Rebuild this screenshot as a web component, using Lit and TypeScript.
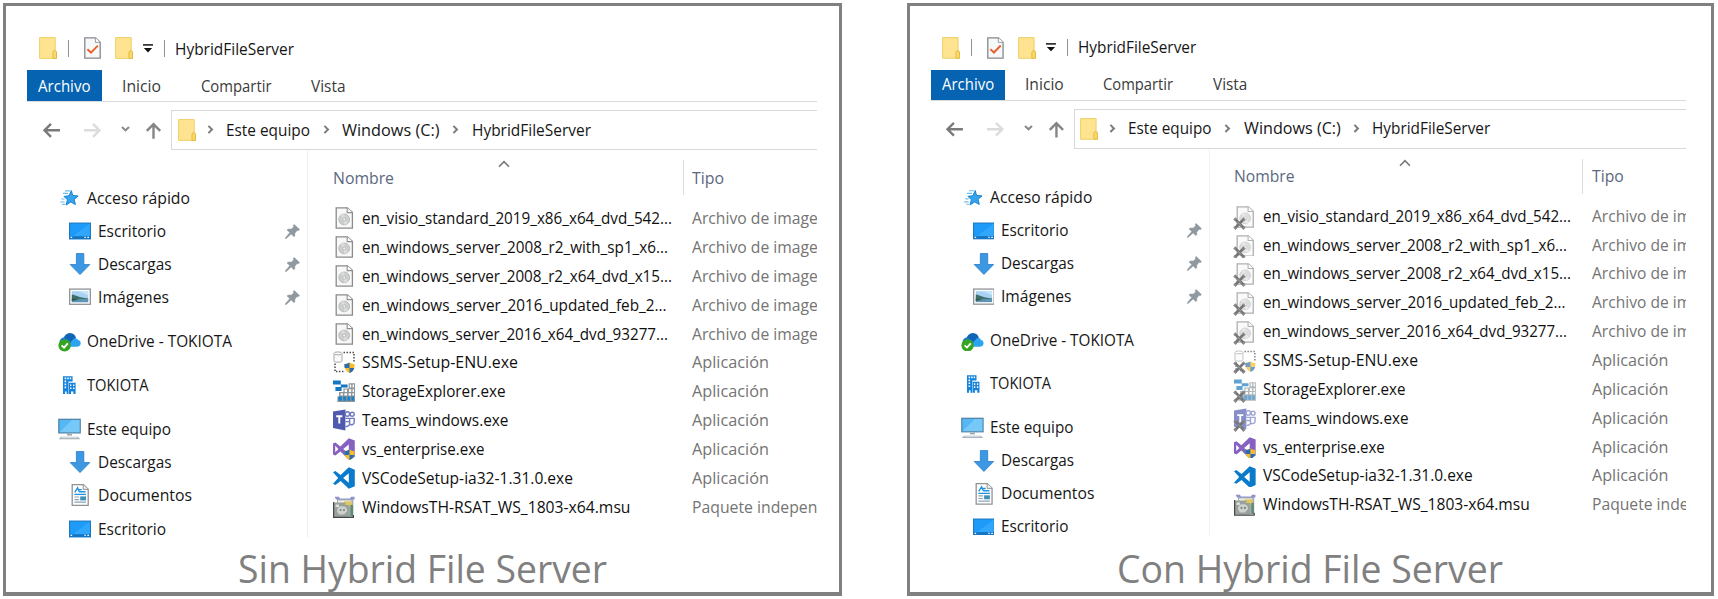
import { LitElement, html, css, svg, nothing, TemplateResult } from "lit";
import { customElement, property } from "lit/decorators.js";

/* ---------- text set to a given advance width ---------- */
@customElement("fit-text")
class FitText extends LitElement {
  @property({ type: Number }) w = 100;
  static styles = css`
    :host { display: inline-block; white-space: nowrap; flex: none; }
    .box { display: block; }
    .t { display: inline-block; transform-origin: 0 50%; }
  `;
  firstUpdated() {
    this.fit();
    document.fonts.ready.then(() => this.fit());
  }
  fit() {
    const box = this.renderRoot.querySelector(".box") as HTMLElement;
    const t = this.renderRoot.querySelector(".t") as HTMLElement;
    t.style.transform = "none";
    const k = box.getBoundingClientRect().width / t.getBoundingClientRect().width;
    t.style.transform = `scaleX(${k})`;
  }
  render() {
    return html`<span class="box" style="width:${this.w}px"><span class="t"><slot></slot></span></span>`;
  }
}

/* ---------- icons ---------- */
const folder = html`<svg width="18" height="22" viewBox="0 0 18 22">
  <path d="M.6.6H16.2V13.6L17.5 14.8V21.4H.6Z" fill="#fee491" stroke="#f0cf66" stroke-width="1"/>
  <path d="M14 21.4V15.2L15.2 13.6H16.2L17.5 14.8V21.4Z" fill="#fbd96c" stroke="#e3b93f" stroke-width="1"/>
</svg>`;

const check = html`<svg width="17" height="22" viewBox="0 0 17 22">
  <path d="M.8.8H11.6L16.2 5.2V21.2H.8Z" fill="#f7f8fa" stroke="#85888c" stroke-width="1.3"/>
  <path d="M11.4.8V5.4H16.2" fill="#fff" stroke="#9a9da0" stroke-width="1"/>
  <path d="M3.4 12.2L7 15.6L13.8 8.6" fill="none" stroke="#e8622c" stroke-width="2"/>
</svg>`;

const dropdown = html`<svg width="10" height="9" viewBox="0 0 10 9">
  <path d="M0 .9H10" stroke="#222" stroke-width="1.6"/><path d="M.8 4H9.2L5 8.4Z" fill="#111"/>
</svg>`;

const arrow = (dir: string, color: string) => {
  const d = dir === "left" ? "M17 8H1.6M8 1.5L1.5 8L8 14.5" : dir === "right" ? "M0 8H15.4M9 1.5L15.5 8L9 14.5" : "M8.5 16.4V1.8M1.8 8.6L8.5 1.8L15.2 8.6";
  return html`<svg width="17" height="17" viewBox="0 0 17 16.4"><path d=${d} fill="none" stroke=${color} stroke-width="2.4"/></svg>`;
};

const chevDown = html`<svg width="9" height="6" viewBox="0 0 9 6"><path d="M1 1L4.5 4.4L8 1" fill="none" stroke="#8a8a8a" stroke-width="2.1"/></svg>`;
const chevRight = html`<svg width="7" height="9" viewBox="0 0 7 9"><path d="M1.4.9L5 4.5L1.4 8.1" fill="none" stroke="#7c7c7c" stroke-width="2"/></svg>`;
const sortUp = html`<svg width="12" height="8" viewBox="0 0 12 8"><path d="M1 6.8L6 1.6L11 6.8" fill="none" stroke="#777" stroke-width="1.6"/></svg>`;

const pin = html`<svg width="15" height="15" viewBox="0 0 15 15">
  <path d="M9.2.4L14.6 5.6L13.4 6.8L12.2 6.4L9.8 9.2C10.2 10.6 9.8 12 9 12.8L6.2 10L1.6 14.2L.2 14.8L.8 13.2L4.8 8.6L2 6C3 4.8 4.8 4.8 6.2 5.2L8.8 2.8L8.2 1.4Z" fill="#8f999f" stroke="#8f999f" stroke-width=".5"/>
</svg>`;

const treeIcons: Record<string, TemplateResult> = {
  star: html`<svg width="22" height="22" viewBox="0 0 22 22">
    <path d="M13.4 3.6L14.6 8.4L20.2 9L16.2 12.4L17.4 17.6L12.8 15L8.2 18L9.4 12.8L6 9.4L11 8.8Z" fill="#35a4ec" stroke="#1b83d0" stroke-width="1"/>
    <path d="M7 3.8H12M5 6.4H10M3.4 12H6.6M2.2 15H6.6M4.2 17.4H7.4" stroke="#6bbdf0" stroke-width="1.2"/>
  </svg>`,
  desktop: html`<svg width="22" height="22" viewBox="0 0 22 22">
    <rect x=".6" y="3.1" width="20.8" height="15.8" fill="#1e9bf8" stroke="#1478c4" stroke-width="1.1"/>
    <path d="M1.2 18.3L20.8 3.7V16H1.2Z" fill="#3fb0ff" opacity=".55"/>
    <path d="M.6 17.6H21.4" stroke="#1374c2" stroke-width="2.6"/>
    <path d="M1.6 17.4H3.2M15.4 17.4H16.8M18.4 17.4H20" stroke="#fff" stroke-width="1.3"/>
  </svg>`,
  down: html`<svg width="22" height="22" viewBox="0 0 22 22">
    <path d="M7.4.6H14.8V11.6H20.8L11 21.6L1.2 11.6H7.4Z" fill="#3d98e4" stroke="#2f82cc" stroke-width=".9"/>
  </svg>`,
  image: html`<svg width="22" height="22" viewBox="0 0 22 22">
    <rect x=".7" y="3.1" width="20.6" height="15.2" fill="#fff" stroke="#8f9295" stroke-width="1.3"/>
    <rect x="2.8" y="5.2" width="16.4" height="11" fill="#a9d2f3"/>
    <path d="M2.8 5.2H10L19.2 9.2V5.2Z" fill="#c9e6fa"/>
    <path d="M2.8 8.6C7 9 9 11.6 19.2 12.6V13.4H2.8Z" fill="#3d6f6a"/>
    <rect x="2.8" y="13" width="16.4" height="3.2" fill="#5d93b4"/>
    <path d="M2.8 12.6L10 13.6L2.8 15Z" fill="#2f5a4a"/>
  </svg>`,
  onedrive: html`<svg width="23" height="22" viewBox="0 0 23 22">
    <path d="M5 11C5 7 8 3 12 3C15.4 3 17.4 5.2 18 8L12 13Z" fill="#0f64b6"/>
    <path d="M1.6 12C1.8 8.6 4.8 7 7.4 7.8L15 13L10 16.6H4Z" fill="#1378d0"/>
    <path d="M10 16.8L15 9.4C16.4 7.4 19.4 8 20 10C22.4 10.4 23 12.4 22.6 14C22.2 15.8 20.8 16.8 19 16.8Z" fill="#2ea4ee"/>
    <circle cx="6.6" cy="15.4" r="6.2" fill="#36a420"/>
    <path d="M3.6 15.4L6 17.7L9.8 13.4" fill="none" stroke="#fff" stroke-width="1.8"/>
  </svg>`,
  building: html`<svg width="22" height="22" viewBox="0 0 22 22">
    <path d="M5 2.2H14.6V7.6H10.4V20H5Z" fill="#1583dc"/>
    <path d="M10.8 8.8H17.6V20H15.4V17.4H13V20H10.8Z" fill="#1583dc"/>
    <path d="M6.6 4.4H8.2M9.2 4.4H10.8M11.8 4.4H13.2M6.6 7.4H8.2M6.6 10.4H8.2M6.6 13.4H8.2M12 11.2H13.4M15 11.2H16.4M12 14.2H13.4M15 14.2H16.4" stroke="#fff" stroke-width="1.6"/>
    <path d="M7 17.4H8.6V20H7Z" fill="#fff"/>
  </svg>`,
  pc: html`<svg width="23" height="22" viewBox="0 0 23 22">
    <rect x=".8" y="1.3" width="21.4" height="13.6" fill="#54b8f4" stroke="#4e7f9f" stroke-width="1.2"/>
    <path d="M1.4 14.3L14 1.9H21.6V14.3Z" fill="#84cffb" opacity=".7"/>
    <path d="M9 16.6H14" stroke="#9aa7b0" stroke-width="1.8"/>
    <path d="M3 18.8H20L22.4 21.2H.6Z" fill="#a9b4bd"/>
    <path d="M3.6 19.4H19.4" stroke="#e4e9ed" stroke-width=".9"/>
  </svg>`,
  doc: html`<svg width="22" height="22" viewBox="0 0 22 22">
    <path d="M3.2.7H14.4L19.2 5.2V21.3H3.2Z" fill="#fff" stroke="#8f9295" stroke-width="1.3"/>
    <path d="M14.2.7V5.4H19.2" fill="#f2f2f2" stroke="#8f9295" stroke-width="1"/>
    <path d="M5.8 8.4L8.6 3.8L10.6 8.4M10 5.6H12.8M11 7.8H16.6M5.4 10.4H17" stroke="#2391dd" stroke-width="1.4" fill="none"/>
    <path d="M5.4 13H10M5.4 15.6H10M5.4 18.2H17" stroke="#8aa4b8" stroke-width="1.2"/>
    <rect x="11.2" y="12.4" width="5.8" height="4" fill="#3f90b8"/>
  </svg>`,
};

const shield = svg`<path d="M16.5 11.6C18.6 13 20 13 21.6 13C21.8 17.6 20 20.6 16.5 22C13 20.6 11.2 17.6 11.4 13C13 13 14.4 13 16.5 11.6Z" fill="#f6bc2c"/>
  <path d="M16.5 11.6V17H11.7C11.4 15.8 11.4 14.4 11.4 13C13 13 14.4 13 16.5 11.6ZM16.5 17H21.3C20.5 19.6 19 21.2 16.5 22Z" fill="#2a6cae"/>`;

const fileIcons: Record<string, TemplateResult> = {
  iso: html`<svg width="22" height="22" viewBox="0 0 22 22">
    <path d="M3.2.8H14.4L19.4 5.4V21.2H3.2Z" fill="#f8f8f8" stroke="#8a8a8a" stroke-width="1.3"/>
    <path d="M14.2.8V5.6H19.4" fill="#fff" stroke="#8e8e8e" stroke-width="1.1"/>
    <circle cx="11.2" cy="12.4" r="5.4" fill="#cdcfcf" stroke="#b0b2b2" stroke-width=".8"/>
    <path d="M11.2 12.4L7.6 8.6A5.2 5.2 0 0 1 11.4 7.2ZM11.2 12.4L15 16A5.2 5.2 0 0 1 11 17.6Z" fill="#dcdede"/>
    <circle cx="11.2" cy="12.4" r="1.5" fill="#f4f4f4" stroke="#aaa" stroke-width=".7"/>
  </svg>`,
  ssms: html`<svg width="22" height="22" viewBox="0 0 22 22">
    <path d="M10.5 1.6H21V11M2 12.5V20.6H12" fill="none" stroke="#4b4b4b" stroke-width="1.5" stroke-dasharray="1.5 1.5"/>
    <path d="M1 2.6V10C1 11.6 9 11.6 9 10V2.6" fill="#fdfdfd" stroke="#a5a5a5" stroke-width="1"/>
    <ellipse cx="5" cy="2.4" rx="4" ry="1.5" fill="#fff" stroke="#a5a5a5" stroke-width="1"/>
    ${shield}
  </svg>`,
  storage: html`<svg width="22" height="22" viewBox="0 0 22 22">
    <path d="M0 .6H7.8V4.6H0ZM7.8 4.4H14.6V7.4H7.8ZM2.4 7H8.6V11H2.4Z" fill="#1377c4"/>
    <path d="M15.6 3.2H22V22H4.4V16.4H6V12H10.4V8.6H15.6Z" fill="#8f969b"/>
    <path d="M16.8 4.4H18.2V7.4H16.8ZM19.6 4.4H21V7.4H19.6ZM11.6 9.6H14V12H11.6ZM16 9.2H18.2V12H16ZM19.6 9.2H21V12H19.6ZM7.6 13.2H9.8V15.4H7.6ZM11.4 13.2H14V15.4H11.4ZM15.6 13.2H18V15.4H15.6ZM19.4 13.2H21V15.4H19.4Z" fill="#fff"/>
    <path d="M5.4 16.6H9V20.8H5.4ZM10.2 16.6H13.2V20.8H10.2ZM14.4 16.6H17.2V20.8H14.4ZM18.4 16.6H21V20.8H18.4Z" fill="#1a80c8"/>
  </svg>`,
  teams: html`<svg width="22" height="22" viewBox="0 0 22 22">
    <path d="M0 2.6L12.4.6V21.4L0 19Z" fill="#5059b0"/>
    <path d="M3.2 7.2H9.4M6.3 7.2V14.6" stroke="#fff" stroke-width="1.9"/>
    <circle cx="14.4" cy="5" r="2.2" fill="none" stroke="#7078c0" stroke-width="1.4"/>
    <circle cx="19.2" cy="5.2" r="2" fill="none" stroke="#7078c0" stroke-width="1.4"/>
    <path d="M12.4 9.4H16.6V15.2C16.4 16.6 14.6 17.8 12.4 17.4M16.6 9.4H21.2V13.6C21.2 15.4 18.6 16.4 16.8 15.2M12.4 12.6H16" fill="none" stroke="#7078c0" stroke-width="1.4"/>
  </svg>`,
  vs: html`<svg width="22" height="22" viewBox="0 0 22 22">
    <path d="M15.8.2L21.8 2.6V19L15.8 21.8L7.4 13.6L2.4 17.6L0 16.4V5.4L2.4 4.4L7.4 8.4ZM15.8 6.4L10.2 11L15.8 15.6ZM2.2 7.8V14.2L5.4 11Z" fill="#8661c1" fill-rule="evenodd"/>
    ${shield}
  </svg>`,
  code: html`<svg width="22" height="22" viewBox="0 0 22 22">
    <path d="M15.8.2L21.8 2.8V19.2L15.8 21.8L7.6 14L2.4 18L0 16.8L5.2 11L0 5.2L2.4 4L7.6 8ZM15.8 6.2L10.2 11L15.8 15.8Z" fill="#0a7acb" fill-rule="evenodd"/>
  </svg>`,
  msu: html`<svg width="22" height="22" viewBox="0 0 22 22">
    <path d="M4 3H20.4V21H4Z" fill="#a5aeb4"/>
    <path d="M1.6.8H6L7 2.4H17L18 .8H21.6V3.6H3Z" fill="#8f93cc"/>
    <path d="M5 4.4H18.4V8H5Z" fill="#eeecdf"/>
    <path d="M11 5.4H18.4V11H11Z" fill="#e3c65a"/>
    <path d="M17.4 9H20V20H17.4Z" fill="#5d8d6c"/>
    <path d="M.6 6.6H12.4V9H16.4V21.4H.6Z" fill="#9aa19c"/>
    <path d="M.6 6V21.4H20.4V19" fill="none" stroke="#44484a" stroke-width="1.2"/>
    <path d="M4 15.4C4 12 6.4 9.6 9.4 10.4C12.4 10 14.6 12.4 14 15.4L11 18.6H6Z" fill="#cdd2cf"/>
    <circle cx="7.6" cy="14" r="1.1" fill="#7b847f"/>
    <circle cx="11" cy="14" r="1.1" fill="#7b847f"/>
    <path d="M2.6 8.6H6V11H2.6Z" fill="#dfe3df"/>
  </svg>`,
};

const offlineMark = html`<svg class="mark" width="13" height="13" viewBox="0 0 13 13">
  <path d="M2.4 2.4L10.6 10.8M10.6 2.4L2.4 10.8" stroke="#757575" stroke-width="2.8"/>
  <path d="M1 3.2L3.2 1M9.8 1L12 3.2M1 10L3.4 12.2M9.6 12.2L12 10" stroke="#8a8a8a" stroke-width="2.2"/>
  <path d="M4.6 5.2L8.4 8.6" stroke="#a5a5a5" stroke-width="1"/>
</svg>`;

/* ---------- data ---------- */
interface Node { icon: string; text: string; w: number; sub?: boolean; pin?: boolean; }
const tree: Node[][] = [
  [
    { icon: "star", text: "Acceso rápido", w: 103 },
    { icon: "desktop", text: "Escritorio", w: 68, sub: true, pin: true },
    { icon: "down", text: "Descargas", w: 73.5, sub: true, pin: true },
    { icon: "image", text: "Imágenes", w: 71, sub: true, pin: true },
  ],
  [{ icon: "onedrive", text: "OneDrive - TOKIOTA", w: 145 }],
  [{ icon: "building", text: "TOKIOTA", w: 61.5 }],
  [
    { icon: "pc", text: "Este equipo", w: 84 },
    { icon: "down", text: "Descargas", w: 73.5, sub: true },
    { icon: "doc", text: "Documentos", w: 94, sub: true },
    { icon: "desktop", text: "Escritorio", w: 68, sub: true },
  ],
];

const ISO: [string, number] = ["Archivo de imagen de disco", 200];
const APP: [string, number] = ["Aplicación", 77];
const files: { icon: string; name: string; w: number; type: [string, number]; off?: boolean }[] = [
  { icon: "iso", name: "en_visio_standard_2019_x86_x64_dvd_542...", w: 310, type: ISO, off: true },
  { icon: "iso", name: "en_windows_server_2008_r2_with_sp1_x6...", w: 306, type: ISO, off: true },
  { icon: "iso", name: "en_windows_server_2008_r2_x64_dvd_x15...", w: 310, type: ISO, off: true },
  { icon: "iso", name: "en_windows_server_2016_updated_feb_2...", w: 304.5, type: ISO, off: true },
  { icon: "iso", name: "en_windows_server_2016_x64_dvd_93277...", w: 306, type: ISO, off: true },
  { icon: "ssms", name: "SSMS-Setup-ENU.exe", w: 156, type: APP, off: true },
  { icon: "storage", name: "StorageExplorer.exe", w: 143.5, type: APP, off: true },
  { icon: "teams", name: "Teams_windows.exe", w: 146.5, type: APP, off: true },
  { icon: "vs", name: "vs_enterprise.exe", w: 122.5, type: APP },
  { icon: "code", name: "VSCodeSetup-ia32-1.31.0.exe", w: 211, type: APP },
  { icon: "msu", name: "WindowsTH-RSAT_WS_1803-x64.msu", w: 268.5, type: ["Paquete independiente", 172] },
];

/* ---------- explorer window ---------- */
@customElement("explorer-window")
class ExplorerWindow extends LitElement {
  @property({ type: Boolean, reflect: true }) compact = false;
  static styles = css`
    :host { display: block; width: 790px; margin-left: 21px; overflow: hidden; font: 15.5px/20px "Open Sans", sans-serif; color: #161616; --row: 28.9px; --node: 33.05px; --tree-top: 31.6px; }
    :host([compact]) { zoom: 0.9935; width: 760px; --row: 29.05px; --node: 33.15px; --tree-top: 32.6px; }
    svg { display: block; flex: none; }
    .title { display: flex; align-items: center; height: 44px; padding: 20px 0 0 11.5px; }
    .title fit-text { margin-top: 1px; }
    .title .sep { width: 1px; height: 17px; background: #909090; }
    .s1 { margin: 0 15px 0 11px; }
    .s2 { margin: 0 10px 0 11px; }
    .g1 { margin-left: 14px; }
    .g2 { margin-left: 10.5px; }
    .tabs { display: flex; height: 31px; border-bottom: 1px solid #d9dbdc; align-items: center; color: #3a3a3a; }
    .tabs .on { display: flex; align-items: center; justify-content: center; width: 75px; height: 31px; background: #0563b1; color: #fff; margin-right: 19.5px; }
    .on fit-text { margin-right: 1px; }
    .tab2 { margin-left: 40px; }
    .nav { display: flex; align-items: center; margin-top: 8px; height: 40px; padding-left: 15.5px; }
    .fwd { margin-left: 24px; }
    .hist { margin: 0 15.5px 3px 20px; }
    .addr { display: flex; align-items: center; flex: 1; height: 38px; margin-left: 9px; border: 1px solid #d9d9d9; border-right: 0; padding-left: 5.5px; white-space: nowrap; }
    .addr > svg, .c { margin-bottom: 1px; }
    .c { margin-left: 12.5px; margin-right: 12.5px; }
    .c0 { margin-left: 11px; }
    .main { display: grid; grid-template-columns: 280.5px 1fr; }
    .tree { display: flex; flex-direction: column; gap: 11px; padding-top: var(--tree-top); height: 356px; border-right: 1px solid #f0f1f2; }
    .node { display: flex; align-items: center; height: var(--node); padding-left: 31px; }
    .node.sub { padding-left: 42px; }
    .ico { display: flex; justify-content: center; width: 22px; margin-right: 7px; }
    .sub .ico { margin-right: 6.5px; }
    .push { margin-left: auto; margin-right: 6.5px; }
    .list { min-width: 0; padding-left: 25px; overflow: hidden; }
    .head { display: grid; grid-template-columns: 351px 1fr; height: 45px; color: #5b6880; }
    .hn { display: grid; grid-template-columns: 165.5px 1fr; border-right: 1px solid #dcdee0; height: 35px; margin-top: 10px; }
    .hn fit-text { margin-top: 8px; }
    .ht { padding-left: 8.5px; padding-top: 18px; }
    .rows { padding-top: 8.6px; }
    .row { display: grid; grid-template-columns: 29px 330.5px 1fr; align-items: center; height: var(--row); color: #101010; }
    .type { color: #747474; }
    .row > * { min-width: 0; }
    .fi { position: relative; width: 22px; height: 22px; }
    .fi.off > svg:first-child { opacity: .68; }
    .mark { position: absolute; left: -1px; bottom: -2px; }
  `;
  render() {
    const n = (d: Node) => html`<div class="node ${d.sub ? "sub" : ""}">
      <span class="ico">${treeIcons[d.icon]}</span><fit-text w=${d.w}>${d.text}</fit-text>
      ${d.pin ? html`<span class="push">${pin}</span>` : nothing}</div>`;
    return html`
      <div class="title">
        ${folder}<span class="sep s1"></span>${check}<span class="g1">${folder}</span>
        <span class="g2">${dropdown}</span><span class="sep s2"></span><fit-text w="119">HybridFileServer</fit-text>
      </div>
      <div class="tabs">
        <span class="on"><fit-text w="52.5">Archivo</fit-text></span>
        <fit-text w="39">Inicio</fit-text>
        <fit-text class="tab2" w="70.5">Compartir</fit-text>
        <fit-text class="tab2" w="34.5">Vista</fit-text>
      </div>
      <div class="nav">
        ${arrow("left", "#7a7a7a")}<span class="fwd">${arrow("right", "#dcdcdc")}</span>
        <span class="hist">${chevDown}</span>${arrow("up", "#858585")}
        <div class="addr">
          ${folder}<span class="c c0">${chevRight}</span><fit-text w="84">Este equipo</fit-text>
          <span class="c">${chevRight}</span><fit-text w="97.5">Windows (C:)</fit-text>
          <span class="c">${chevRight}</span><fit-text w="119">HybridFileServer</fit-text>
        </div>
      </div>
      <div class="main">
        <div class="tree">${tree.map((g) => html`<div>${g.map(n)}</div>`)}</div>
        <div class="list">
          <div class="head">
            <div class="hn"><fit-text w="61">Nombre</fit-text><span>${sortUp}</span></div>
            <div class="ht"><fit-text w="32">Tipo</fit-text></div>
          </div>
          <div class="rows">
            ${files.map((f) => html`<div class="row">
              <span class="fi ${f.off && this.compact ? "off" : ""}">${fileIcons[f.icon]}${f.off && this.compact ? offlineMark : nothing}</span>
              <fit-text w=${f.w}>${f.name}</fit-text>
              <fit-text class="type" w=${f.type[1]}>${f.type[0]}</fit-text>
            </div>`)}
          </div>
        </div>
      </div>`;
  }
}

@customElement("app-root")
class AppRoot extends LitElement {
  static styles = css`
    :host { display: flex; gap: 65px; height: 599px; box-sizing: border-box; padding: 3px 4px 3px 3px; background: #fff; overflow: hidden; }
    .panel { display: flex; flex-direction: column; box-sizing: border-box; height: 593px; border: 3px solid #808080; border-bottom-width: 4px; background: #fff; }
    .a { width: 839px; }
    .b { width: 807px; }
    explorer-window { flex: none; }
    .caption { margin-top: auto; text-align: center; height: 49px; padding-right: 1px; font: 38px/50px "Open Sans", sans-serif; color: #808080; }
    .b .caption { padding-right: 2px; }
  `;
  render() {
    return html`
      <section class="panel a">
        <explorer-window></explorer-window>
        <div class="caption"><fit-text w="369">Sin Hybrid File Server</fit-text></div>
      </section>
      <section class="panel b">
        <explorer-window compact></explorer-window>
        <div class="caption"><fit-text w="386">Con Hybrid File Server</fit-text></div>
      </section>`;
  }
}
